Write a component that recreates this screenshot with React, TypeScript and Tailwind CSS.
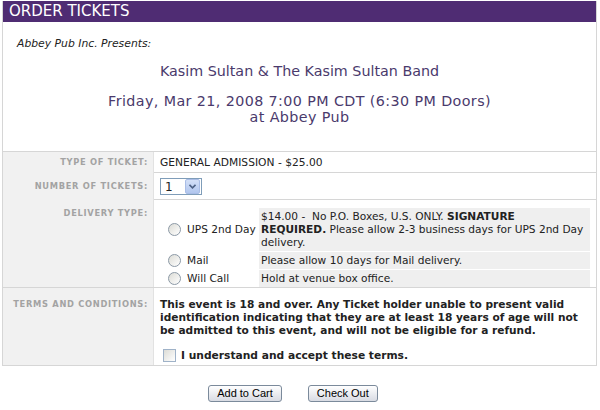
import React from "react";

const Label = ({ children, className = "" }: any) => (
  <div
    className={`bg-[#f1f1f1] text-right pr-[5px] text-[8.3px] font-bold tracking-[0.7px] text-[#a3a3a3] uppercase ${className}`}
  >
    {children}
  </div>
);

const Radio = () => (
  <span className="inline-block w-[13px] h-[13px] rounded-full border border-[#8c99a6] bg-gradient-to-br from-[#dcdcd6] to-white shrink-0" />
);

const deliveryOptions = [
  {
    name: "UPS 2nd Day",
    desc: (
      <>
        $14.00 -&nbsp; No P.O. Boxes, U.S. ONLY. <b>SIGNATURE</b>
        <br />
        <b>REQUIRED.</b> Please allow 2-3 business days for UPS 2nd Day
        <br />
        delivery.
      </>
    ),
  },
  { name: "Mail", desc: "Please allow 10 days for Mail delivery." },
  { name: "Will Call", desc: "Hold at venue box office." },
];

export default function App() {
  return (
    <div
      className="w-[600px] h-[410px] bg-white text-[#222] overflow-hidden"
      style={{ fontFamily: "Verdana, 'DejaVu Sans', sans-serif" }}
    >
      <div className="ml-[2px] w-[595px] mt-[1px] border-x border-b border-[#d6d6d6]">
        <div className="h-[21px] bg-[#4f2c73] text-white text-[15px] leading-[21px] pl-[6px]">
          ORDER TICKETS
        </div>

        <div className="h-[129px] pt-[15px]">
          <div className="pl-[14px] text-[10.8px] italic leading-[13px]">Abbey Pub Inc. Presents:</div>
          <div className="mt-[13px] text-center text-[14.3px] leading-[16px] text-[#4a3a6c]">
            Kasim Sultan &amp; The Kasim Sultan Band
          </div>
          <div className="mt-[14px] text-center text-[14.3px] tracking-[0.4px] leading-[16px] text-[#4a3a6c]">
            Friday, Mar 21, 2008 7:00 PM CDT (6:30 PM Doors)
            <br />
            at Abbey Pub
          </div>
        </div>

        <div className="grid grid-cols-[150px_1fr] border-t border-[#d6d6d6] h-[21px]">
          <Label className="leading-[21px]">Type of Ticket:</Label>
          <div className="pl-[6px] text-[10.7px] leading-[21px] border-l border-[#e2e2e2]">
            GENERAL ADMISSION - $25.00
          </div>
        </div>

        <div className="grid grid-cols-[150px_1fr] border-t border-[#d6d6d6] h-[27px]">
          <Label className="leading-[27px]">Number of Tickets:</Label>
          <div className="pl-[6px] border-l border-[#e2e2e2] flex items-center">
            <div className="w-[42px] h-[17px] border border-[#7f9db9] bg-white flex items-center justify-between">
              <span className="text-[12px] pl-[4px] leading-none">1</span>
              <span className="w-[15px] h-[15px] mr-[1px] rounded-[2px] bg-gradient-to-b from-[#d4e0f7] to-[#b1c6ee] border border-[#a9bde6] flex items-center justify-center">
                <svg width="7" height="5" viewBox="0 0 7 5">
                  <path d="M0.5 0.8 L3.5 3.8 L6.5 0.8" stroke="#4d6185" strokeWidth="1.6" fill="none" />
                </svg>
              </span>
            </div>
          </div>
        </div>

        <div className="grid grid-cols-[150px_1fr] border-t border-[#d6d6d6] h-[88px]">
          <Label className="pt-[8px] leading-[10px]">Delivery Type:</Label>
          <div className="pl-[6px] pr-[6px] pt-[8px] border-l border-[#e2e2e2] text-[10.6px] leading-[13px]">
            <div className="grid grid-cols-[99px_1fr] gap-y-[1px]">
              {deliveryOptions.map((o) => (
                <React.Fragment key={o.name}>
                  <div className="flex items-center gap-[6px] pl-[8px]">
                    <Radio />
                    <span>{o.name}</span>
                  </div>
                  <div className="bg-[#efefef] pl-[2px] py-[2px] whitespace-nowrap overflow-hidden">{o.desc}</div>
                </React.Fragment>
              ))}
            </div>
          </div>
        </div>

        <div className="grid grid-cols-[150px_1fr] border-t border-[#d6d6d6] h-[78px]">
          <Label className="pt-[11px] leading-[10px]">Terms and Conditions:</Label>
          <div className="pl-[6px] pr-[6px] pt-[10px] border-l border-[#e2e2e2] text-[10.6px] font-bold leading-[13px]">
            <div className="whitespace-nowrap">
              This event is 18 and over. Any Ticket holder unable to present valid
              <br />
              identification indicating that they are at least 18 years of age will not
              <br />
              be admitted to this event, and will not be eligible for a refund.
            </div>
            <div className="mt-[12px] flex items-center gap-[5px] pl-[3px]">
              <span className="inline-block w-[13px] h-[13px] border border-[#9fb2c8] bg-gradient-to-br from-[#dcdcd6] to-white" />
              <span className="text-[10.7px]">I understand and accept these terms.</span>
            </div>
          </div>
        </div>
      </div>

      <div className="mt-[19px] flex justify-center gap-[26px] pr-[14px]">
        {["Add to Cart", "Check Out"].map((t) => (
          <button
            key={t}
            className="h-[17px] px-[8px] border border-[#7b8a9b] rounded-[3px] bg-gradient-to-b from-white to-[#d8dbe3] text-[11px] leading-[15px] text-black"
            style={{ fontFamily: "Tahoma, 'Liberation Sans', sans-serif" }}
          >
            {t}
          </button>
        ))}
      </div>
    </div>
  );
}
